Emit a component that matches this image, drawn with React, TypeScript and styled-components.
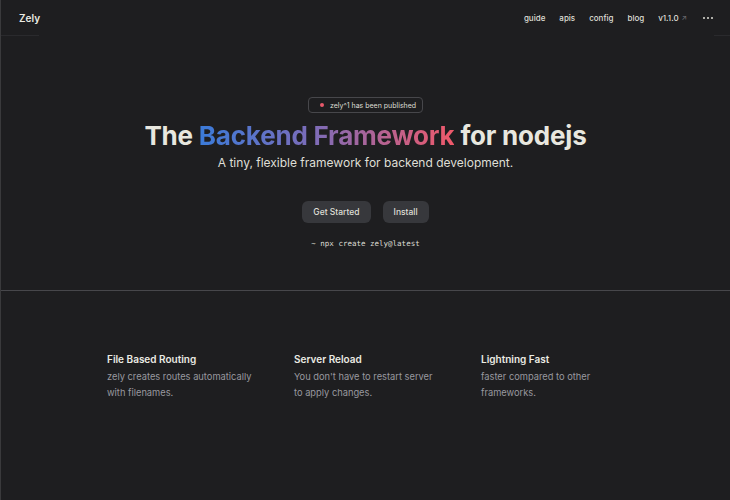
import React from "react";
import styled, { createGlobalStyle } from "styled-components";

const Global = createGlobalStyle`
  html, body { margin: 0; padding: 0; background: #1e1e20; }
  body {
    font-family: Inter, "Noto Sans", sans-serif;
    color: #dfdfd6;
    -webkit-font-smoothing: antialiased;
  }
`;

const Page = styled.div`
  min-height: 500px;
  background: #1e1e20;
  border-left: 1px solid #3a3a3c;
  box-sizing: border-box;
  display: flex;
  flex-direction: column;
`;

const Nav = styled.header`
  height: 35px;
  display: flex;
  align-items: center;
  justify-content: space-between;
  padding: 0 17px 0 18px;
  box-sizing: border-box;
`;

const NavDivider = styled.div`
  display: flex;
  justify-content: space-between;
  height: 1px;
`;

const DividerPiece = styled.span<{ $w: number }>`
  width: ${(p) => p.$w}px;
  background: #2a2a2d;
`;

const Brand = styled.div`
  font-size: 10px;
  font-weight: 600;
  color: #ebebe3;
`;

const NavLinks = styled.nav`
  display: flex;
  align-items: center;
  gap: 14px;
  font-size: 8px;
  font-weight: 500;
  color: #dfdfd6;
`;

const Version = styled.span`
  display: inline-flex;
  align-items: center;
  gap: 3px;
`;

const Ext = styled.span`
  color: #6b6b70;
  font-size: 7px;
`;

const Dots = styled.span`
  margin-left: 2px;
  display: inline-flex;
  gap: 2px;
  align-items: center;
`;

const Dot = styled.span`
  width: 2px;
  height: 2px;
  border-radius: 50%;
  background: #dfdfd6;
`;

const Hero = styled.section`
  height: 255px;
  display: flex;
  flex-direction: column;
  align-items: center;
  padding-top: 61px;
  box-sizing: border-box;
  border-bottom: 1px solid #47474b;
`;

const Badge = styled.div`
  height: 16px;
  box-sizing: border-box;
  border: 1px solid #47474b;
  border-radius: 4px;
  padding: 0 6px 0 11px;
  display: flex;
  align-items: center;
  gap: 6px;
  font-size: 7px;
  color: #dfdfd6;
`;

const BadgeDot = styled.span`
  width: 4px;
  height: 4px;
  border-radius: 50%;
  background: #e8596b;
`;

const Title = styled.h1`
  margin: 7px 0 0;
  font-size: 26px;
  line-height: 32px;
  font-weight: 700;
  letter-spacing: -0.2px;
  color: #e8e7df;
`;

const Gradient = styled.span`
  background: linear-gradient(90deg, #3b7bd9 0%, #7d6cb8 45%, #f0596a 100%);
  -webkit-background-clip: text;
  background-clip: text;
  color: transparent;
`;

const Subtitle = styled.p`
  margin: 3px 0 0;
  font-size: 12px;
  line-height: 16px;
  font-weight: 400;
  color: #dfdfd6;
`;

const Actions = styled.div`
  margin-top: 30px;
  display: flex;
  gap: 12px;
`;

const Button = styled.button`
  height: 22px;
  padding: 0 11px;
  border: 0;
  border-radius: 6px;
  background: #37383c;
  color: #dfdfd6;
  font-family: Inter, sans-serif;
  font-size: 8.5px;
  font-weight: 500;
`;

const Command = styled.code`
  margin-top: 15px;
  font-family: "DejaVu Sans Mono", monospace;
  font-size: 7.5px;
  line-height: 12px;
  color: #dfdfd6;
`;

const Features = styled.section`
  display: grid;
  grid-template-columns: repeat(3, 187px);
  justify-content: center;
  padding-top: 61px;
`;

const Feature = styled.div`
  padding: 0 0 0 22px;
`;

const FeatureTitle = styled.h3`
  margin: 0;
  font-size: 10px;
  line-height: 14px;
  font-weight: 600;
  color: #ebebe3;
`;

const FeatureText = styled.p`
  margin: 3px 0 0;
  font-size: 9.3px;
  line-height: 16px;
  color: #98989f;
  white-space: nowrap;
`;

const features = [
  { title: "File Based Routing", lines: ["zely creates routes automatically", "with filenames."] },
  { title: "Server Reload", lines: ["You don't have to restart server", "to apply changes."] },
  { title: "Lightning Fast", lines: ["faster compared to other", "frameworks."] },
];

export default function App() {
  return (
    <Page>
      <Global />
      <Nav>
        <Brand>Zely</Brand>
        <NavLinks>
          <span>guide</span>
          <span>apis</span>
          <span>config</span>
          <span>blog</span>
          <Version>
            v1.1.0 <Ext>↗</Ext>
          </Version>
          <Dots>
            <Dot />
            <Dot />
            <Dot />
          </Dots>
        </NavLinks>
      </Nav>
      <NavDivider>
        <DividerPiece $w={38} />
        <DividerPiece $w={16} />
      </NavDivider>
      <Hero>
        <Badge>
          <BadgeDot />
          <span>zely^1 has been published</span>
        </Badge>
        <Title>
          The <Gradient>Backend Framework</Gradient> for nodejs
        </Title>
        <Subtitle>A tiny, flexible framework for backend development.</Subtitle>
        <Actions>
          <Button>Get Started</Button>
          <Button>Install</Button>
        </Actions>
        <Command>~ npx create zely@latest</Command>
      </Hero>
      <Features>
        {features.map((f) => (
          <Feature key={f.title}>
            <FeatureTitle>{f.title}</FeatureTitle>
            <FeatureText>
              {f.lines[0]}
              <br />
              {f.lines[1]}
            </FeatureText>
          </Feature>
        ))}
      </Features>
    </Page>
  );
}
